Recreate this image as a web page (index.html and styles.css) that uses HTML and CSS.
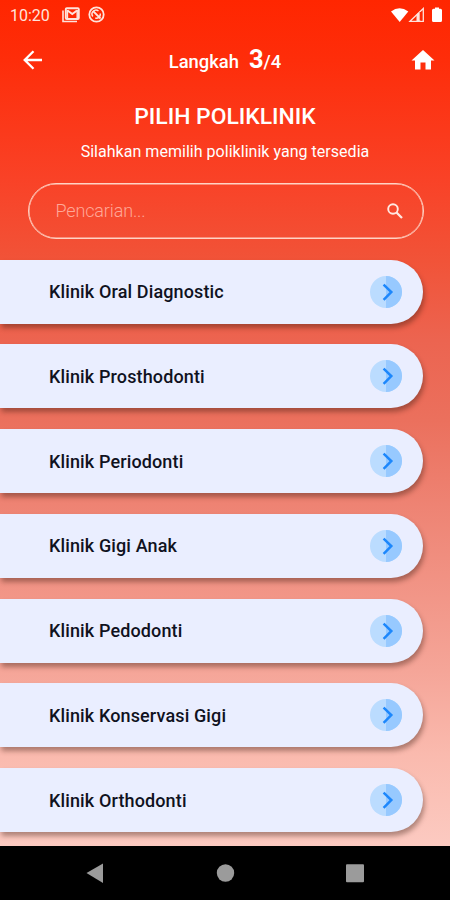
FILE: index.html
```html
<!DOCTYPE html>
<html lang="id">
<head>
<meta charset="utf-8">
<title>Pilih Poliklinik</title>
<link rel="stylesheet" href="styles.css">
</head>
<body>
<svg width="0" height="0" class="defs">
  <symbol id="next" viewBox="0 0 32 32">
    <circle cx="16" cy="16" r="16" fill="#bbdcff"/>
    <path d="M16 0a16 16 0 0 1 0 32z" fill="#97c9ff"/>
    <path d="M13.6 8.600l7.700 7.500-7.700 7.700" fill="none" stroke="#1c87fc" stroke-width="2.500"/>
  </symbol>
</svg>
<div class="screen">
  <div class="status">
    <span class="time">10:20</span>
    <svg class="mail" width="18" height="16" viewBox="0 0 18 16" fill="none" stroke="#ffe3dc">
      <path d="M1 3.500V14.500h14" stroke-width="1.600"/>
      <rect x="3.800" y="1.200" width="13" height="10.800" rx="1" stroke-width="1.900"/>
      <path d="M5.500 3.500l4.800 3.500L15 3.500" stroke-width="2"/>
      <path d="M5.400 3v8.500M15.200 3v8.500" stroke-width="1.500"/>
    </svg>
    <svg class="sync" width="17" height="17" viewBox="0 0 17 17" fill="none" stroke="#ffe3dc">
      <circle cx="8.500" cy="8.500" r="7.200" stroke-width="1.800"/>
      <path d="M4.800 10.500A4 4 0 0 1 10.500 5M12.300 7.500a4 4 0 0 1-5 4.500" stroke-width="1.500"/>
      <path d="M5 5l7.500 7.500" stroke-width="1.800"/>
    </svg>
    <svg class="signals" width="52" height="17" viewBox="0 0 52 17" fill="#fff">
      <path d="M1 4.500Q9.500-2 18.300 4.500L9.700 15z"/>
      <path d="M20 14.300L33.300 1.500v12.800z" fill="none" stroke="#ffe3dc" stroke-width="1.300"/>
      <path d="M26.500 7.500l4-3.500v10.500h-4z" fill="#ffe3dc"/>
      <path d="M30.800 5v8.500" stroke="#ff2a06" stroke-width="2.200"/>
      <path d="M45 .500h4v1.300h1.500q1.500 0 1.500 1.500v10.200q0 1.500-1.500 1.500h-7q-1.500 0-1.500-1.500V3.300q0-1.500 1.500-1.500H45z"/>
    </svg>
  </div>
  <header class="bar">
    <svg class="back" width="20" height="20" viewBox="0 0 20 20" fill="none" stroke="#fff" stroke-width="2.300"><path d="M19 10H2M10.500 1.200L1.700 10l8.800 8.800"/></svg>
    <div class="step"><span class="label">Langkah</span><span class="current">3</span><span class="total">/4</span></div>
    <svg class="home" width="24" height="20" viewBox="0 0 24 20" fill="#fff"><path d="M12 0l11.500 10.400H20V19.500h-5.500V12.500h-5v7H4V10.400H.5z"/></svg>
  </header>
  <h1>PILIH POLIKLINIK</h1>
  <p class="sub">Silahkan memilih poliklinik yang tersedia</p>
  <div class="search">
    <span>Pencarian...</span>
    <svg width="16" height="16" viewBox="0 0 16 16" fill="none" stroke="#ffe8e2" stroke-width="1.900"><circle cx="6" cy="6" r="4.800"/><path d="M9.500 9.500l5.500 5.500" stroke-width="2.300"/></svg>
  </div>
  <main class="list">
    <div class="card"><span>Klinik Oral Diagnostic</span><svg><use href="#next"/></svg></div>
    <div class="card"><span>Klinik Prosthodonti</span><svg><use href="#next"/></svg></div>
    <div class="card"><span>Klinik Periodonti</span><svg><use href="#next"/></svg></div>
    <div class="card"><span>Klinik Gigi Anak</span><svg><use href="#next"/></svg></div>
    <div class="card"><span>Klinik Pedodonti</span><svg><use href="#next"/></svg></div>
    <div class="card"><span>Klinik Konservasi Gigi</span><svg><use href="#next"/></svg></div>
    <div class="card"><span>Klinik Orthodonti</span><svg><use href="#next"/></svg></div>
  </main>
</div>
<nav class="nav">
  <svg width="450" height="54" viewBox="0 0 450 54" fill="#9b9b9b">
    <path d="M86.500 27L103 17.500v19.500z"/>
    <circle cx="225.500" cy="27" r="8.700"/>
    <rect x="346" y="18.300" width="18" height="18" rx="1"/>
  </svg>
</nav>
</body>
</html>
```
FILE: styles.css
```css
* { box-sizing: border-box; }
body {
  margin: 0;
  width: 450px;
  height: 900px;
  overflow: hidden;
  display: flex;
  flex-direction: column;
  font-family: Roboto, "Liberation Sans", sans-serif;
  color: #fff;
  background: #000;
}
svg { display: block; flex: none; }
.defs { position: absolute; }
.screen {
  height: 846px;
  overflow: hidden;
  background: linear-gradient(#ff2600 0, #fe2d0a 60px, #f94227 180px, #f15338 260px, #ec6450 340px, #eb705d 420px, #ee8373 505px, #f5a598 670px, #fabaae 755px, #fccac1 846px);
}
.status {
  height: 30px;
  padding: 0 8px 0 10px;
  display: flex;
  align-items: center;
}
.time { width: 52px; font-size: 16px; color: #ffe3dc; }
.mail { margin-right: 8px; margin-top: -1px; }
.sync { margin-top: -1px; }
.signals { margin-left: auto; }
.bar {
  height: 60px;
  padding: 0 15px 0 23px;
  display: flex;
  align-items: center;
  justify-content: space-between;
}
.step {
  display: flex;
  align-items: baseline;
  padding-bottom: 2px;
  margin-left: -4px;
  font-weight: 500;
  font-size: 18.400px;
}
.current { margin-left: 10px; font-size: 25.500px; font-weight: 700; }
h1 {
  margin: 12px 0 0;
  font-size: 22.900px;
  line-height: 30px;
  font-weight: 500;
  text-align: center;
}
.sub {
  margin: 10px 0 0;
  font-size: 16px;
  line-height: 20px;
  letter-spacing: .03px;
  text-align: center;
}
.search {
  margin: 21px 26.500px 0 27.500px;
  height: 56px;
  padding: 0 19.500px 0 27px;
  border: 1px solid #ffd3c5;
  box-shadow: inset 0 0 0 .5px #ffd3c5;
  border-radius: 28px;
  display: flex;
  align-items: center;
  justify-content: space-between;
  font-size: 18px;
  font-weight: 300;
  letter-spacing: -.15px;
  color: #ffa797;
}
.search span { padding-bottom: 2px; }
.list { margin-top: 20.500px; display: grid; gap: 20.800px; }
.card {
  width: 423px;
  height: 64px;
  padding: 0 21px 0 49px;
  border-radius: 0 32px 32px 0;
  background: #eaeeff;
  box-shadow: 1.500px 4px 5px rgba(50, 20, 10, .38);
  display: flex;
  align-items: center;
  justify-content: space-between;
  font-size: 18px;
  font-weight: 500;
  letter-spacing: .13px;
  color: #10121e;
}
.card svg { width: 32px; height: 32px; }
.nav { height: 54px; background: #000; }
```
